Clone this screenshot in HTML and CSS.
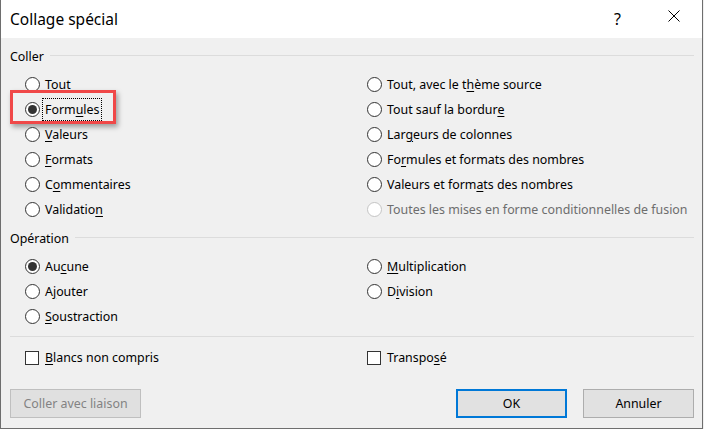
FILE: index.html
```html
<!DOCTYPE html>
<html lang="fr">
<head>
    <meta charset="UTF-8">
    <title>Collage spécial</title>
    <link rel="stylesheet" href="styles.css">
</head>
<body>
    <div class="dialog">
        <div class="title-bar">
            <div class="title">Collage spécial</div>
            <div class="title-help">?</div>
            <div class="title-close">
                <svg width="12" height="12" viewBox="0 0 12 12">
                    <path d="M0.5 0.5 L11.5 11.5 M11.5 0.5 L0.5 11.5" stroke="#000" stroke-width="1" fill="none"/>
                </svg>
            </div>
        </div>

        <div class="content">
            <div class="group-title"><span>Coller</span><div class="group-line"></div></div>
            <div class="options">
                <div class="option"><span class="radio"></span><span class="label">Tout</span></div>
                <div class="option"><span class="radio"></span><span class="label">Tout, avec le t<u>h</u>ème source</span></div>
                <div class="option highlighted"><span class="radio checked"></span><span class="label focus">Form<u>u</u>les</span></div>
                <div class="option"><span class="radio"></span><span class="label">Tout sauf la bordur<u>e</u></span></div>
                <div class="option"><span class="radio"></span><span class="label"><u>V</u>aleurs</span></div>
                <div class="option"><span class="radio"></span><span class="label">Lar<u>g</u>eurs de colonnes</span></div>
                <div class="option"><span class="radio"></span><span class="label"><u>F</u>ormats</span></div>
                <div class="option"><span class="radio"></span><span class="label">Fo<u>r</u>mules et formats des nombres</span></div>
                <div class="option"><span class="radio"></span><span class="label">C<u>o</u>mmentaires</span></div>
                <div class="option"><span class="radio"></span><span class="label">Valeurs et form<u>a</u>ts des nombres</span></div>
                <div class="option"><span class="radio"></span><span class="label">Validatio<u>n</u></span></div>
                <div class="option disabled"><span class="radio"></span><span class="label">Toutes les mises en forme conditionnelles de fusion</span></div>
            </div>

            <div class="group-title second"><span>Opération</span><div class="group-line"></div></div>
            <div class="options">
                <div class="option"><span class="radio checked"></span><span class="label">Au<u>c</u>une</span></div>
                <div class="option"><span class="radio"></span><span class="label"><u>M</u>ultiplication</span></div>
                <div class="option"><span class="radio"></span><span class="label">A<u>j</u>outer</span></div>
                <div class="option"><span class="radio"></span><span class="label">D<u>i</u>vision</span></div>
                <div class="option"><span class="radio"></span><span class="label"><u>S</u>oustraction</span></div>
                <div class="option"></div>
            </div>

            <div class="separator"></div>

            <div class="options checks">
                <div class="option"><span class="checkbox"></span><span class="label"><u>B</u>lancs non compris</span></div>
                <div class="option"><span class="checkbox"></span><span class="label">Transpo<u>s</u>é</span></div>
            </div>

            <div class="buttons">
                <button class="btn btn-disabled">Coller avec liaison</button>
                <div class="spacer"></div>
                <button class="btn btn-default">OK</button>
                <button class="btn">Annuler</button>
            </div>
        </div>
    </div>
</body>
</html>
```

FILE: styles.css
```css
body {
    margin: 0;
    font-family: "Noto Sans", sans-serif;
    font-size: 12.4px;
    color: #000;
    background: #f0f0f0;
}

.dialog {
    width: 703px;
    height: 429px;
    box-sizing: border-box;
    border: 1px solid #6e6e6e;
    border-top: none;
    background: #f0f0f0;
    display: flex;
    flex-direction: column;
}

.title-bar {
    height: 38px;
    background: #fff;
    display: flex;
    align-items: center;
    padding-left: 9px;
}

.title {
    font-size: 15.5px;
    flex: 1;
    margin-top: -1px;
}

.title-help {
    font-size: 16px;
    width: 12px;
    margin-right: 42px;
    margin-top: -1px;
}

.title-close {
    width: 12px;
    height: 12px;
    margin-right: 22px;
    margin-top: -6px;
}

.title-close svg {
    display: block;
}

.content {
    padding: 0 8px 0 9px;
    display: flex;
    flex-direction: column;
}

.group-title {
    height: 18px;
    margin-top: 9px;
    display: flex;
    align-items: center;
}

.group-title.second {
    margin-top: 7px;
}

.group-line {
    flex: 1;
    height: 1px;
    background: #dcdcdc;
    margin-left: 6px;
    margin-top: -2px;
}

.options {
    display: grid;
    grid-template-columns: 342px 1fr;
    grid-auto-rows: 25px;
    padding-left: 15px;
    margin-top: 7px;
}

.options.checks {
    margin-top: 8px;
}

.option {
    display: flex;
    align-items: center;
    position: relative;
}

.radio {
    width: 15px;
    height: 15px;
    box-sizing: border-box;
    border: 1px solid #333;
    border-radius: 50%;
    background: #fff;
    margin-right: 5px;
    display: flex;
    align-items: center;
    justify-content: center;
    flex-shrink: 0;
}

.radio.checked::after {
    content: "";
    width: 9px;
    height: 9px;
    border-radius: 50%;
    background: #333;
}

.checkbox {
    width: 14px;
    height: 14px;
    box-sizing: border-box;
    border: 1px solid #333;
    background: #fff;
    margin-right: 6px;
    flex-shrink: 0;
}

.label {
    white-space: nowrap;
}

.label u {
    text-underline-offset: 2px;
}

.label.focus {
    outline: 1px dotted #000;
    outline-offset: 2px;
}

.disabled .radio {
    border-color: #c4c4c4;
}

.disabled .label {
    color: #6d6d6d;
}

/* annotation rouge autour de "Formules" */
.highlighted::before {
    content: "";
    position: absolute;
    left: -15px;
    top: -7px;
    width: 106px;
    height: 34px;
    box-sizing: border-box;
    border: 3px solid #f04848;
    box-shadow: 2px 3px 5px rgba(0, 0, 0, 0.35);
}

.separator {
    height: 1px;
    background: #dcdcdc;
    margin-top: 7px;
}

.buttons {
    display: flex;
    margin-top: 19px;
}

.spacer {
    flex: 1;
}

.btn {
    height: 29px;
    width: 111px;
    box-sizing: border-box;
    border: 1px solid #adadad;
    background: #e1e1e1;
    font-family: "Noto Sans", sans-serif;
    font-size: 12.4px;
    color: #000;
    padding: 0;
}

.btn + .btn {
    margin-left: 16px;
}

.btn-default {
    border: 2px solid #0078d7;
}

.btn-disabled {
    width: 131px;
    border-color: #bfbfbf;
    background: #e0e0e0;
    color: #838383;
}
```
